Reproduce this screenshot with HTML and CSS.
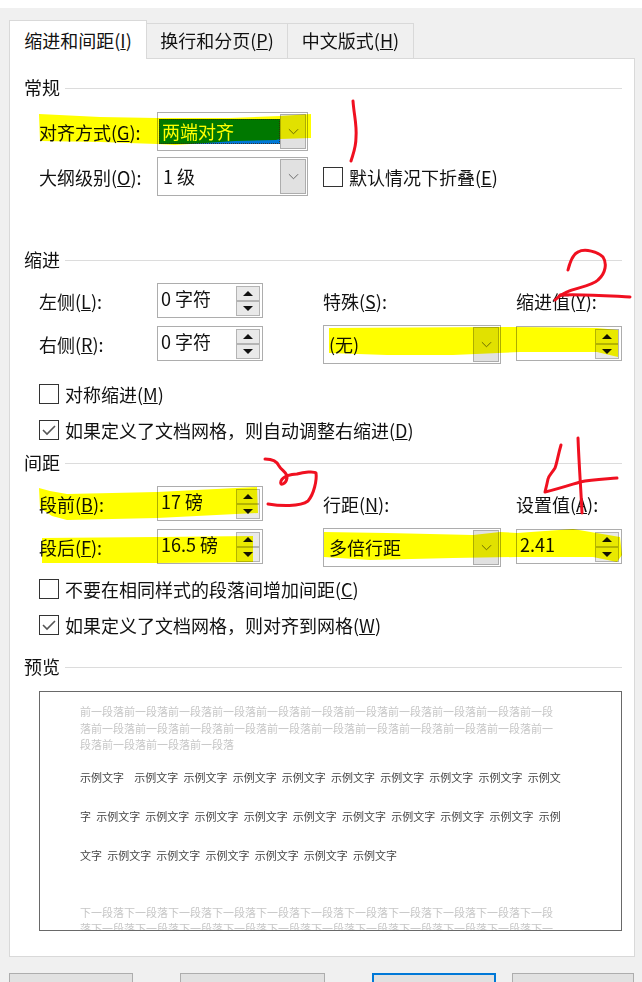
FILE: index.html
```html
<!DOCTYPE html>
<html lang="zh-CN">
<head>
<meta charset="UTF-8">
<title>段落</title>
<link rel="stylesheet" href="styles.css">
</head>
<body>

<div class="dialog">
    <!-- tabs -->
    <div class="tabs">
        <div class="tab tab-active">缩进和间距(<u>I</u>)</div>
        <div class="tab tab-2">换行和分页(<u>P</u>)</div>
        <div class="tab tab-3">中文版式(<u>H</u>)</div>
    </div>

    <div class="panel">
        <!-- general -->
        <div class="heading"><span>常规</span></div>
        <div class="general">
            <div class="row">
                <span class="label">对齐方式(<u>G</u>):</span>
                <div class="select select-short">
                    <span class="select-value is-selected">两端对齐</span>
                    <span class="select-btn"><svg viewBox="0 0 12 7"><path d="M1 1l5 5 5-5" fill="none" stroke="#606060"/></svg></span>
                </div>
            </div>
            <div class="row">
                <span class="label">大纲级别(<u>O</u>):</span>
                <div class="select select-short">
                    <span class="select-value">1 级</span>
                    <span class="select-btn"><svg viewBox="0 0 12 7"><path d="M1 1l5 5 5-5" fill="none" stroke="#606060"/></svg></span>
                </div>
                <label class="check check-inline"><span class="box"></span><span>默认情况下折叠(<u>E</u>)</span></label>
            </div>
        </div>

        <!-- indent -->
        <div class="heading heading-indent"><span>缩进</span></div>
        <div class="fields">
            <div class="col-a">
                <div class="row">
                    <span class="label">左侧(<u>L</u>):</span>
                    <div class="spin"><span class="spin-value">0 字符</span><span class="spin-btns"><i class="up"></i><i class="down"></i></span></div>
                </div>
                <div class="row">
                    <span class="label">右侧(<u>R</u>):</span>
                    <div class="spin"><span class="spin-value">0 字符</span><span class="spin-btns"><i class="up"></i><i class="down"></i></span></div>
                </div>
            </div>
            <div class="col-b">
                <div class="col-label">特殊(<u>S</u>):</div>
                <div class="select select-wide">
                    <span class="select-value">(无)</span>
                    <span class="select-btn"><svg viewBox="0 0 12 7"><path d="M1 1l5 5 5-5" fill="none" stroke="#606060"/></svg></span>
                </div>
            </div>
            <div class="col-c">
                <div class="col-label">缩进值(<u>Y</u>):</div>
                <div class="spin"><span class="spin-value"></span><span class="spin-btns"><i class="up"></i><i class="down"></i></span></div>
            </div>
        </div>
        <div class="checks checks-indent">
            <label class="check"><span class="box"></span><span>对称缩进(<u>M</u>)</span></label>
            <label class="check"><span class="box"><svg viewBox="0 0 18 18"><path d="M3 9l4 4 8-8" fill="none" stroke="#555" stroke-width="1.6"/></svg></span><span>如果定义了文档网格，则自动调整右缩进(<u>D</u>)</span></label>
        </div>

        <!-- spacing -->
        <div class="heading heading-spacing"><span>间距</span></div>
        <div class="fields">
            <div class="col-a">
                <div class="row">
                    <span class="label">段前(<u>B</u>):</span>
                    <div class="spin"><span class="spin-value">17 磅</span><span class="spin-btns"><i class="up"></i><i class="down"></i></span></div>
                </div>
                <div class="row">
                    <span class="label">段后(<u>F</u>):</span>
                    <div class="spin"><span class="spin-value">16.5 磅</span><span class="spin-btns"><i class="up"></i><i class="down"></i></span></div>
                </div>
            </div>
            <div class="col-b">
                <div class="col-label">行距(<u>N</u>):</div>
                <div class="select select-wide">
                    <span class="select-value">多倍行距</span>
                    <span class="select-btn"><svg viewBox="0 0 12 7"><path d="M1 1l5 5 5-5" fill="none" stroke="#606060"/></svg></span>
                </div>
            </div>
            <div class="col-c">
                <div class="col-label">设置值(<u>A</u>):</div>
                <div class="spin"><span class="spin-value">2.41</span><span class="spin-btns"><i class="up"></i><i class="down"></i></span></div>
            </div>
        </div>
        <div class="checks checks-spacing">
            <label class="check"><span class="box"></span><span>不要在相同样式的段落间增加间距(<u>C</u>)</span></label>
            <label class="check"><span class="box"><svg viewBox="0 0 18 18"><path d="M3 9l4 4 8-8" fill="none" stroke="#555" stroke-width="1.6"/></svg></span><span>如果定义了文档网格，则对齐到网格(<u>W</u>)</span></label>
        </div>

        <!-- preview -->
        <div class="heading heading-preview"><span>预览</span></div>
        <div class="preview">
            <div class="para-grey">
                <div>前一段落前一段落前一段落前一段落前一段落前一段落前一段落前一段落前一段落前一段落前一段</div>
                <div>落前一段落前一段落前一段落前一段落前一段落前一段落前一段落前一段落前一段落前一段落前一</div>
                <div>段落前一段落前一段落前一段落</div>
            </div>
            <div class="para-sample">
                <div>示例文字&nbsp; 示例文字 示例文字 示例文字 示例文字 示例文字 示例文字 示例文字 示例文字 示例文</div>
                <div>字 示例文字 示例文字 示例文字 示例文字 示例文字 示例文字 示例文字 示例文字 示例文字 示例</div>
                <div>文字 示例文字 示例文字 示例文字 示例文字 示例文字 示例文字</div>
            </div>
            <div class="para-grey para-next">
                <div>下一段落下一段落下一段落下一段落下一段落下一段落下一段落下一段落下一段落下一段落下一段</div>
                <div>落下一段落下一段落下一段落下一段落下一段落下一段落下一段落下一段落下一段落下一段落下一</div>
            </div>
        </div>
    </div>

    <!-- bottom buttons, cut off by the window -->
    <div class="buttons">
        <div class="btn btn-tabs"></div>
        <div class="btn btn-default"></div>
        <div class="btn btn-ok"></div>
        <div class="btn btn-cancel"></div>
    </div>
</div>

<!-- marker strokes drawn on top of the screenshot -->
<svg class="marker marker-yellow" viewBox="0 0 642 982">
    <path d="M39 114L100 117 157 118 230 118 280 116 311 114 311 138 280 139 276 140 235 141 175 145 157 144 100 142 40 141Z"/>
    <path d="M329 328L500 327 516 327 597 328 618 330 618 357 597 352 520 352 453 355 387 355 329 353Z"/>
    <path d="M39 488L50 491 67 494 157 492 257 487 258 513 157 518 67 520 52 516 40 508Z"/>
    <path d="M42 538L157 537 253 536 253 562 157 563 42 563Z"/>
    <path d="M324 532L387 533 473 535 500 532 517 533 573 529 620 537 622 555 617 562 593 557 517 557 453 558 370 560 324 557Z"/>
</svg>
<svg class="marker marker-red" viewBox="0 0 642 982">
    <path d="M353 101C354 115 357 125 356 137C356 148 353 154 351 161"/>
    <path d="M568 270C570 262 573 254 578 252C585 248 598 252 603 257C607 263 606 273 598 280C592 286 575 288 567 292C562 294 558 297 555 300"/>
    <path d="M560 295C585 294 610 296 630 297"/>
    <path d="M265 459C272 459 277 461 279 466C282 471 288 473 287 478C286 484 279 487 281 481C283 476 291 474 297 474C304 472 314 471 316 473C317 480 314 494 308 501C300 507 280 506 268 504"/>
    <path d="M561 445C558 455 557 463 555 468C552 473 549 475 548 479C547 484 546 488 545 492C558 489 570 485 580 482C592 479 605 479 617 478"/>
    <path d="M578 438C579 465 581 490 582 513"/>
</svg>

</body>
</html>
```

FILE: styles.css
```css
/* ===== PAGE ===== */
*{box-sizing:border-box;margin:0;padding:0;}
html,body{height:982px;overflow:hidden;}
body{
    position:relative;
    background:#fff;
    color:#111;
    font-family:"Noto Sans CJK SC","Noto Sans",sans-serif;
    font-size:18px;
    line-height:24px;
}
.dialog{
    margin-top:8px;
    height:974px;
    padding:12px 0 0 9px;
    background:#f0f0f0;
}

/* ===== TABS ===== */
.tabs{
    display:flex;
    align-items:flex-end;
    height:38px;
}
.tab{
    height:35px;
    padding-top:4px;
    text-align:center;
    white-space:nowrap;
    border:1px solid #d9d9d9;
    border-left:none;
    border-bottom:none;
}
.tab-active{
    position:relative;
    z-index:1;
    width:138px;
    height:39px;
    margin-bottom:-1px;
    padding-top:7px;
    background:#fff;
    border-left:1px solid #d9d9d9;
}
.tab-2{width:141px;}
.tab-3{width:126px;}

/* ===== PANEL ===== */
.panel{
    width:626px;
    height:899px;
    padding:17px 12px 0 14px;
    background:#fff;
    border:1px solid #d9d9d9;
}
.heading{
    display:flex;
    align-items:center;
    gap:5px;
    height:24px;
}
.heading span{position:relative;top:-1px;}
.heading::after{
    content:"";
    flex:1;
    height:1px;
    background:#dcdcdc;
}
.heading-indent{margin-top:52px;}
.heading-spacing{margin-top:9px;}
.heading-preview{margin-top:18px;}

/* ===== ROWS ===== */
.general{
    display:flex;
    flex-direction:column;
    gap:6px;
    margin-top:12px;
    padding-left:15px;
}
.row{
    display:flex;
    align-items:center;
}
.label{
    width:118px;
    white-space:nowrap;
}
.fields{
    display:flex;
    height:78px;
    margin-top:11px;
    padding-left:15px;
}
.col-a{
    display:flex;
    flex-direction:column;
    gap:8px;
    width:284px;
}
.col-b{width:193px;}
.col-c{width:106px;}
.col-label{
    height:24px;
    margin:6px 0 12px;
    white-space:nowrap;
}
.col-c .spin{margin-top:13px;}

/* ===== SELECT ===== */
.select{
    display:flex;
    justify-content:space-between;
    align-items:center;
    height:39px;
    padding:1px;
    background:#fff;
    border:1px solid #adadad;
}
.select-short{width:151px;}
.select-wide{width:178px;}
.select-value{
    flex:1;
    padding:0 0 2px 4px;
    white-space:nowrap;
}
.is-selected{
    height:25px;
    padding:0 0 0 3px;
    color:#fff;
    background:#0078d7;
    outline:1px dotted #333;
    outline-offset:-1px;
}
.select-btn{
    display:flex;
    align-items:center;
    justify-content:center;
    flex:none;
    width:26px;
    height:35px;
    background:#e1e1e1;
    border:1px solid #adadad;
}
.select-btn svg{width:11px;height:7px;}

/* ===== SPIN BOX ===== */
.spin{
    display:flex;
    align-items:center;
    width:106px;
    height:35px;
    padding-right:2px;
    background:#fff;
    border:1px solid #adadad;
}
.spin-value{
    flex:1;
    padding:0 0 5px 3px;
    white-space:nowrap;
}
.spin-btns{
    display:flex;
    flex-direction:column;
    flex:none;
    width:24px;
}
.spin-btns i{
    display:flex;
    align-items:center;
    justify-content:center;
    height:15px;
    background:#e9e9e9;
    border:1px solid #b4b4b4;
}
.spin-btns i::after{
    content:"";
    border-left:5px solid transparent;
    border-right:5px solid transparent;
}
.spin-btns .up::after{border-bottom:5px solid #111;}
.spin-btns .down::after{border-top:5px solid #111;}

/* ===== CHECKBOXES ===== */
.checks{
    display:flex;
    flex-direction:column;
    gap:12px;
    padding-left:15px;
}
.checks-indent{margin-top:21px;}
.checks-spacing{margin-top:13px;}
.check{
    display:flex;
    align-items:center;
    gap:6px;
    height:24px;
    white-space:nowrap;
}
.check-inline{margin-left:15px;}
.box{
    display:flex;
    flex:none;
    width:20px;
    height:20px;
    background:#fff;
    border:1px solid #333;
}
.box svg{width:18px;height:18px;}

/* ===== PREVIEW ===== */
.preview{
    height:240px;
    margin:12px 0 0 15px;
    padding:11px 0 0 40px;
    overflow:hidden;
    background:#fff;
    border:1px solid #696969;
    font-size:11px;
    white-space:nowrap;
}
.para-grey{
    line-height:16.5px;
    color:#c6c6c6;
}
.para-sample{
    margin-top:5px;
    line-height:39px;
    color:#444;
    word-spacing:2.7px;
}
.para-next{margin-top:29px;}

/* ===== BOTTOM BUTTONS ===== */
.buttons{
    display:flex;
    margin-top:16px;
}
.btn{
    flex:none;
    height:30px;
    background:#e1e1e1;
    border:1px solid #adadad;
}
.btn-tabs{width:124px;}
.btn-default{width:145px;margin-left:47px;}
.btn-ok{width:124px;margin-left:47px;border:2px solid #0078d7;}
.btn-cancel{width:122px;margin-left:16px;}

/* ===== MARKER OVERLAY ===== */
.marker{
    position:absolute;
    top:0;
    left:0;
    width:642px;
    height:982px;
    pointer-events:none;
}
.marker-yellow{mix-blend-mode:multiply;}
.marker-yellow path{fill:#ff0;}
.marker-red path{
    fill:none;
    stroke:#f01020;
    stroke-width:3;
    stroke-linecap:round;
    stroke-linejoin:round;
}
```
